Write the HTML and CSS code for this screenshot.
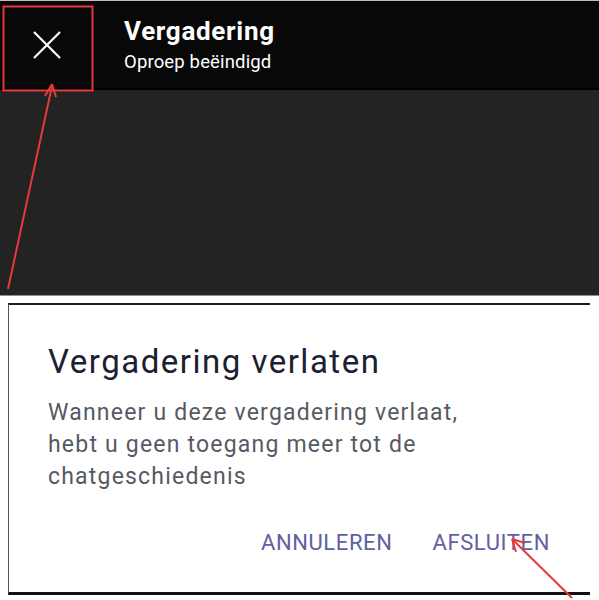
FILE: index.html
```html
<!DOCTYPE html>
<html lang="nl">
<head>
<meta charset="utf-8">
<title>Vergadering</title>
<link rel="stylesheet" href="styles.css">
</head>
<body>
<div class="page">
  <div class="top-line"></div>
  <header class="header">
    <div class="close-btn">
      <svg width="28" height="28" viewBox="0 0 28 28"><path d="M1 1 L27 27 M27 1 L1 27" stroke="#fff" stroke-width="2.2" fill="none"/></svg>
    </div>
    <div class="titles">
      <div class="title">Vergadering</div>
      <div class="subtitle">Oproep beëindigd</div>
    </div>
  </header>
  <div class="stage"></div>
  <div class="spacer"></div>
  <section class="dialog">
    <h1 class="dialog-title">Vergadering verlaten</h1>
    <p class="dialog-text">Wanneer u deze vergadering verlaat,<br>hebt u geen toegang meer tot de<br>chatgeschiedenis</p>
    <div class="actions">
      <span class="btn">ANNULEREN</span>
      <span class="btn">AFSLUITEN</span>
    </div>
  </section>
  <svg class="annot" width="599" height="600" viewBox="0 0 599 600">
    <rect x="3.5" y="6.5" width="89" height="84" fill="none" stroke="#e5393e" stroke-width="2"/>
    <line x1="8" y1="289" x2="52" y2="86" stroke="#e5393e" stroke-width="2"/>
    <path d="M52 84 L45 96 M52 84 L56 97" stroke="#e5393e" stroke-width="2" fill="none"/>
    <line x1="572" y1="598" x2="513" y2="540" stroke="#e5393e" stroke-width="2"/>
    <path d="M512 539 L525 543 M512 539 L516 552" stroke="#e5393e" stroke-width="2" fill="none"/>
  </svg>
</div>
</body>
</html>
```
FILE: styles.css
```css
html, body {
  margin: 0;
  padding: 0;
  background: #ffffff;
}
.page {
  position: relative;
  width: 599px;
  height: 600px;
  overflow: hidden;
  font-family: Roboto, "Noto Sans", sans-serif;
}
.top-line {
  height: 1px;
  background: #bdbdbd;
}
.header {
  height: 87px;
  background: #080808;
  border-bottom: 2px solid #020202;
  display: flex;
  align-items: center;
}
.close-btn {
  width: 94px;
  height: 87px;
  display: flex;
  align-items: center;
  justify-content: center;
}
.titles {
  padding-left: 30px;
  color: #ffffff;
  margin-top: -1px;
}
.title {
  font-weight: 700;
  font-size: 26px;
  line-height: 30px;
  letter-spacing: 0.7px;
}
.subtitle {
  font-size: 18.5px;
  line-height: 22px;
  margin-top: 5px;
  letter-spacing: 0.15px;
}
.stage {
  height: 205px;
  background: #232323;
  border-bottom: 1px solid #8f8f8f;
}
.spacer {
  height: 7px;
}
.dialog {
  margin-left: 8px;
  width: 582px;
  height: 292px;
  border-top: 2px solid #1e1e1e;
  border-left: 1px solid #555555;
  border-bottom: 3px solid #111111;
  padding: 0 0 0 39px;
  box-sizing: border-box;
  display: flex;
  flex-direction: column;
}
.dialog-title {
  margin: 37px 0 0 0;
  font-weight: 400;
  font-size: 33px;
  line-height: 40px;
  letter-spacing: 1.5px;
  color: #1b2131;
}
.dialog-text {
  margin: 15px 0 0 0;
  font-size: 23px;
  line-height: 32px;
  letter-spacing: 1.2px;
  color: #555a63;
}
.actions {
  display: flex;
  justify-content: flex-end;
  gap: 40px;
  padding-right: 40px;
  margin-top: 37px;
}
.btn {
  font-size: 22px;
  line-height: 26px;
  color: #5f60a3;
  letter-spacing: 0.6px;
}
.annot {
  position: absolute;
  left: 0;
  top: 0;
  pointer-events: none;
}
```
